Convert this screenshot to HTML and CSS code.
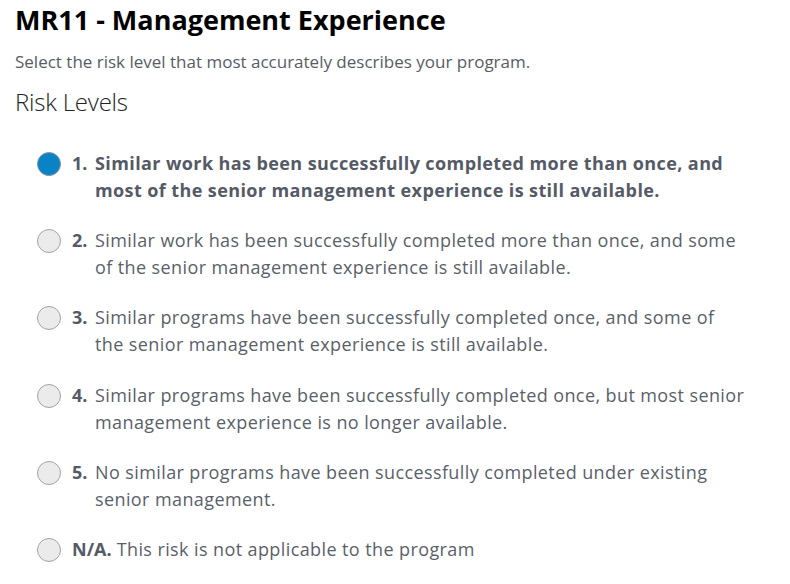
FILE: index.html
```html
<!DOCTYPE html>
<html lang="en">
<head>
<meta charset="utf-8">
<title>MR11 - Management Experience</title>
<link rel="stylesheet" href="styles.css">
</head>
<body>
<main class="page">
  <h1 class="title">MR11 - Management Experience</h1>
  <p class="subtitle">Select the risk level that most accurately describes your program.</p>
  <h2 class="section">Risk Levels</h2>
  <ul class="levels">
    <li class="level selected">
      <span class="radio"></span>
      <span class="label"><b class="num">1.</b>Similar work has been successfully completed more than once, and<br>most of the senior management experience is still available.</span>
    </li>
    <li class="level">
      <span class="radio"></span>
      <span class="label"><b class="num">2.</b>Similar work has been successfully completed more than once, and some<br>of the senior management experience is still available.</span>
    </li>
    <li class="level">
      <span class="radio"></span>
      <span class="label"><b class="num">3.</b>Similar programs have been successfully completed once, and some of<br>the senior management experience is still available.</span>
    </li>
    <li class="level">
      <span class="radio"></span>
      <span class="label"><b class="num">4.</b>Similar programs have been successfully completed once, but most senior<br>management experience is no longer available.</span>
    </li>
    <li class="level">
      <span class="radio"></span>
      <span class="label"><b class="num">5.</b>No similar programs have been successfully completed under existing<br>senior management.</span>
    </li>
    <li class="level">
      <span class="radio"></span>
      <span class="label"><b class="num">N/A.</b>This risk is not applicable to the program</span>
    </li>
  </ul>
</main>
</body>
</html>
```
FILE: styles.css
```css
html, body {
  margin: 0;
  padding: 0;
  background: #ffffff;
}
body {
  font-family: "Open Sans", "Noto Sans", "Liberation Sans", sans-serif;
}
.page {
  padding: 0 15px;
}
.title {
  margin: 0;
  padding-top: 2px;
  font-size: 27px;
  line-height: 36px;
  font-weight: 700;
  color: #000;
}
.subtitle {
  margin: 12px 0 0;
  font-size: 17px;
  line-height: 24px;
  color: #575c66;
}
.section {
  margin: 12px 0 0;
  font-size: 24px;
  line-height: 32px;
  font-weight: 300;
  color: #222;
  letter-spacing: -0.2px;
}
.levels {
  list-style: none;
  margin: 32px 0 0;
  padding: 0 0 0 22px;
}
.level {
  display: flex;
  align-items: flex-start;
  gap: 11px;
  margin-bottom: 23.2px;
}
.radio {
  flex: none;
  box-sizing: border-box;
  width: 24px;
  height: 24px;
  margin-top: 2px;
  border-radius: 50%;
  border: 1px solid #a3a3a3;
  background: #ebebeb;
}
.selected .radio {
  background: #0a82c6;
  border-color: #8894a0;
}
.label {
  display: block;
  white-space: nowrap;
  padding-left: 23px;
  text-indent: -23px;
  font-size: 18px;
  line-height: 27px;
  letter-spacing: 0.4px;
  color: #5a5f6a;
}
.num {
  display: inline-block;
  box-sizing: border-box;
  min-width: 23px;
  padding-right: 5px;
  text-indent: 0;
  letter-spacing: 0;
  font-weight: 700;
  color: #555a66;
}
.selected .label {
  font-weight: 700;
  color: #555a66;
}
```
